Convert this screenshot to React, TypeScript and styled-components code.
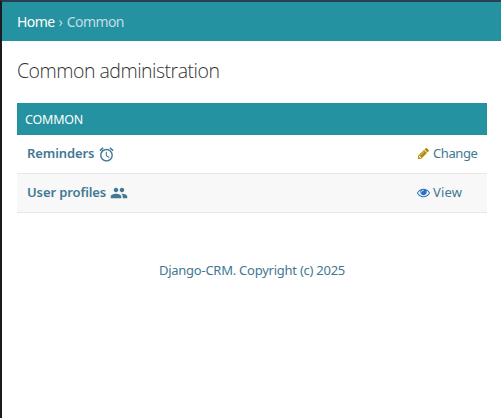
import React from 'react';
import styled, { createGlobalStyle } from 'styled-components';
import { MdAlarm, MdPeople } from 'react-icons/md';

const GlobalStyle = createGlobalStyle`
  * { box-sizing: border-box; }
  body {
    margin: 0;
    background: #fff;
    font-family: "Noto Sans", "Open Sans", sans-serif;
    font-size: 13px;
    color: #333;
  }
`;

const Page = styled.div`
  height: 418px;
  border-left: 2px solid #1c1c20;
  border-top: 2px solid #263f52;
  overflow: hidden;
`;

const Breadcrumbs = styled.nav`
  display: flex;
  gap: 4px;
  height: 39px;
  padding: 0 15px;
  line-height: 40px;
  font-size: 14px;
  background: #2492a0;
  color: #c4dce8;
`;

const HomeLink = styled.a`
  color: #fff;
  letter-spacing: -0.6px;
`;

const Current = styled.span`
  letter-spacing: -0.6px;
`;

const Content = styled.main`
  padding: 16px 14px 0 15px;
`;

const Title = styled.h1`
  margin: 0 0 19px;
  height: 27px;
  line-height: 27px;
  font-family: "Open Sans", sans-serif;
  font-size: 19.5px;
  font-weight: 300;
  letter-spacing: -0.5px;
`;

const Caption = styled.h2`
  margin: 0;
  height: 32px;
  padding-left: 8px;
  line-height: 33px;
  font-size: 12.5px;
  font-weight: 400;
  letter-spacing: -0.2px;
  color: #fff;
  background: #2492a0;
`;

const Row = styled.div<{ $shaded?: boolean }>`
  display: flex;
  height: 39px;
  padding: 0 0 2px 10px;
  line-height: 36px;
  border-bottom: 1px solid #e8e8e8;
  background: ${p => (p.$shaded ? '#f8f8f8' : '#fff')};
  color: #417893;
`;

const Model = styled.a`
  display: flex;
  align-items: center;
  width: 390px;
  font-weight: 600;
  letter-spacing: -0.1px;
  svg {
    margin: 2px 0 0 4px;
    flex: none;
  }
`;

const Action = styled.a<{ $spacing: string }>`
  display: flex;
  align-items: center;
  gap: 3px;
  letter-spacing: ${p => p.$spacing};
  svg {
    flex: none;
  }
`;

const Footer = styled.footer`
  margin-top: 47px;
  line-height: 20px;
  text-align: center;
  letter-spacing: -0.25px;
  color: #417893;
`;

const PencilIcon = () => (
  <svg width="13" height="13" viewBox="0 0 1792 1792">
    <path fill="#b48c08" d="M491 1536l91-91-235-235-91 91v107h128v128h107zm523-928q0-22-22-22-10 0-17 7l-542 542q-7 7-7 17 0 22 22 22 10 0 17-7l542-542q7-7 7-17zm-54-192l416 416-832 832h-416v-416zm683 96q0 53-37 90l-166 166-416-416 166-165q36-38 90-38 53 0 91 38l235 234q37 39 37 91z" />
  </svg>
);

const EyeIcon = () => (
  <svg width="13" height="13" viewBox="0 0 1792 1792">
    <path fill="#2b70bf" d="M1664 960q-152-236-381-353 61 104 61 225 0 185-131.5 316.5t-316.5 131.5-316.5-131.5-131.5-316.5q0-121 61-225-229 117-381 353 133 205 333.5 326.5t434.5 121.5 434.5-121.5 333.5-326.5zm-720-384q0-20-14-34t-34-14q-125 0-214.5 89.5t-89.5 214.5q0 20 14 34t34 14 34-14 14-34q0-86 61-147t147-61q20 0 34-14t14-34zm848 384q0 34-20 69-140 230-376.5 368.5t-499.5 138.5-499.5-139-376.5-368q-20-35-20-69t20-69q140-229 376.5-368t499.5-139 499.5 139 376.5 368q20 35 20 69z" />
  </svg>
);

export default function App() {
  return (
    <>
      <GlobalStyle />
      <Page>
        <Breadcrumbs>
          <HomeLink>Home</HomeLink>
          <span>›</span>
          <Current>Common</Current>
        </Breadcrumbs>
        <Content>
          <Title>Common administration</Title>
          <Caption>COMMON</Caption>
          <Row>
            <Model>Reminders<MdAlarm size={17} /></Model>
            <Action $spacing="-0.4px"><PencilIcon />Change</Action>
          </Row>
          <Row $shaded>
            <Model>User profiles<MdPeople size={18} /></Model>
            <Action $spacing="0.2px"><EyeIcon />View</Action>
          </Row>
          <Footer>Django-CRM. Copyright (c) 2025</Footer>
        </Content>
      </Page>
    </>
  );
}
